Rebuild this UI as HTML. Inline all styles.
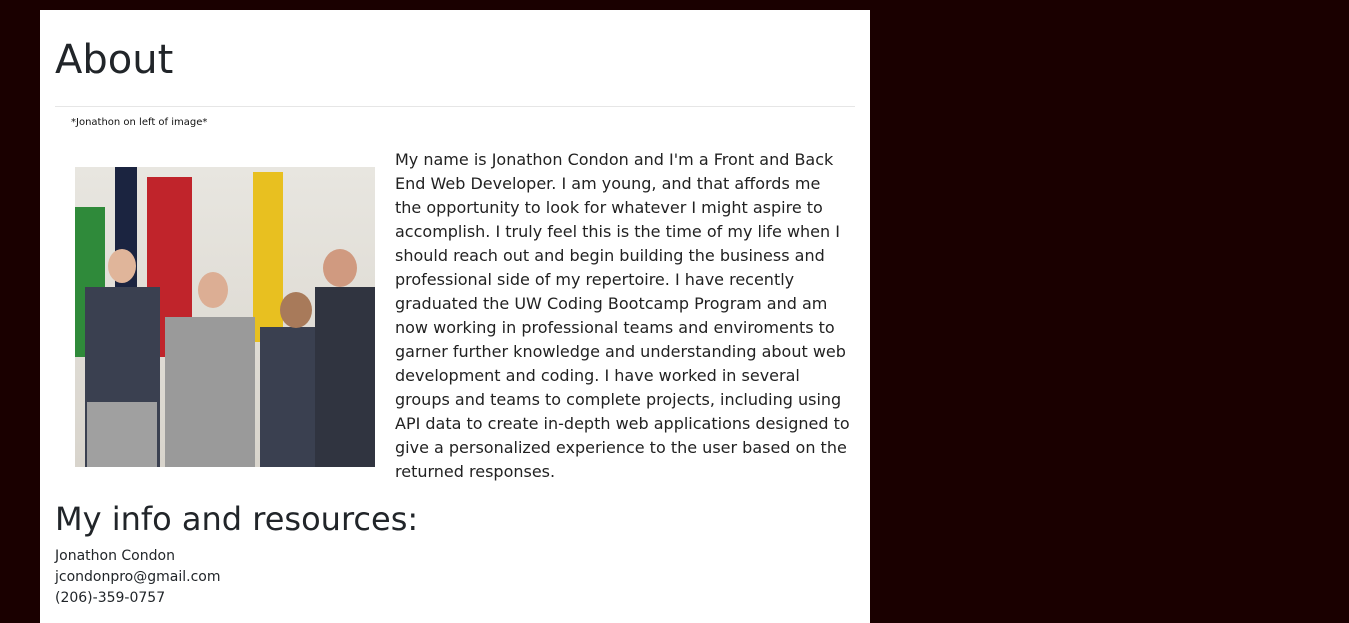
<!DOCTYPE html>
<html><head><style>
body{margin:0;background:#1a0000;width:1349px;height:623px;overflow:hidden;font-family:"DejaVu Sans","Liberation Sans",sans-serif;color:#212529}
.panel{position:absolute;left:40px;top:10px;width:830px;height:613px;background:#fff}
h1{position:absolute;left:15px;top:26px;margin:0;font-weight:400;font-size:40px;line-height:48px}
hr{position:absolute;left:15px;top:96px;width:800px;margin:0;border:0;border-top:1px solid #e6e6e6}
.cap{position:absolute;left:31px;top:107px;font-size:10px;color:#111}
.img{position:absolute;left:35px;top:157px;width:300px;height:300px;background:linear-gradient(#e8e6e0,#d8d4cc);overflow:hidden}
.img div{position:absolute}
.txt{position:absolute;left:355px;top:138px;font-size:16px;line-height:24px;white-space:nowrap;color:#222}
h2{position:absolute;left:15px;top:489px;margin:0;font-weight:400;font-size:32px;line-height:40px}
.info{position:absolute;left:15px;top:536px;font-size:14px;line-height:21px}
</style></head><body><div class="panel">
<h1>About</h1><hr>
<div class="cap">*Jonathon on left of image*</div>
<div class="img">
<div style="left:0;top:40px;width:30px;height:150px;background:#2f8a3a"></div>
<div style="left:40px;top:0;width:22px;height:120px;background:#1b2440"></div>
<div style="left:72px;top:10px;width:45px;height:180px;background:#c0242b"></div>
<div style="left:178px;top:5px;width:30px;height:170px;background:#e8c020"></div>
<div style="left:10px;top:120px;width:75px;height:180px;background:#3a4050"></div>
<div style="left:12px;top:235px;width:70px;height:65px;background:#a0a0a0"></div>
<div style="left:90px;top:150px;width:90px;height:150px;background:#9a9a9a"></div>
<div style="left:185px;top:160px;width:85px;height:140px;background:#3a4050"></div>
<div style="left:240px;top:120px;width:60px;height:180px;background:#303440"></div>
<div style="left:33px;top:82px;width:28px;height:34px;border-radius:50%;background:#e0b59a"></div>
<div style="left:123px;top:105px;width:30px;height:36px;border-radius:50%;background:#dcae94"></div>
<div style="left:205px;top:125px;width:32px;height:36px;border-radius:50%;background:#a87a5a"></div>
<div style="left:248px;top:82px;width:34px;height:38px;border-radius:50%;background:#d09a80"></div>
</div>
<div class="txt">My name is Jonathon Condon and I'm a Front and Back<br>End Web Developer. I am young, and that affords me<br>the opportunity to look for whatever I might aspire to<br>accomplish. I truly feel this is the time of my life when I<br>should reach out and begin building the business and<br>professional side of my repertoire. I have recently<br>graduated the UW Coding Bootcamp Program and am<br>now working in professional teams and enviroments to<br>garner further knowledge and understanding about web<br>development and coding. I have worked in several<br>groups and teams to complete projects, including using<br>API data to create in-depth web applications designed to<br>give a personalized experience to the user based on the<br>returned responses.</div>
<h2>My info and resources:</h2>
<div class="info">Jonathon Condon<br>jcondonpro@gmail.com<br>(206)-359-0757</div>
</div></body></html>
